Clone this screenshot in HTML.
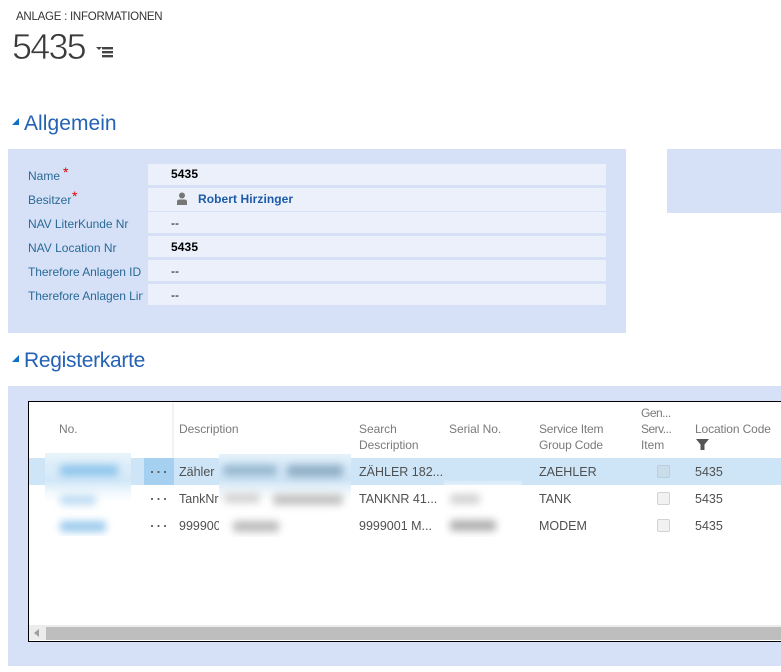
<!DOCTYPE html>
<html><head><meta charset="utf-8"><style>
html,body{margin:0;padding:0;background:#fff}
#p{position:relative;width:781px;height:672px;overflow:hidden;background:#fff;font-family:"Liberation Sans",sans-serif;font-size:12px;color:#444}
#p div,#p span.a{position:absolute;white-space:nowrap}
.lab{left:28px;color:#2a6a96;font-size:12px;line-height:16px;width:119px;overflow:hidden}
.row{left:148px;width:458px;background:#ebf0fb}
.val{left:171px;font-size:12px;line-height:16px;color:#000}
.b{font-weight:bold}
.h{color:#7a7a7a;font-size:12px;line-height:16px;letter-spacing:-.05px}
.c{color:#505050;font-size:12.5px;line-height:16px}
.cb{left:657px;width:11px;height:11px;border:1px solid #d2d2d2;border-radius:2px;background:#f2f2f2}
.dots{left:151px;width:16px;height:2px;background:radial-gradient(circle at 1px 1px,#555 1px,transparent 1.1px) 0 0/6.5px 2px repeat-x}
.bl{filter:blur(4px);border-radius:3px}
.patch{overflow:hidden}
</style></head><body><div id="p">

<div style="left:16px;top:10px;font-size:11.5px;line-height:14px;color:#333;letter-spacing:-.25px">ANLAGE : INFORMATIONEN</div>
<div style="left:12px;top:26px;font-size:36px;line-height:42px;color:#3a3a3a;letter-spacing:-1.8px;-webkit-text-stroke:.7px #fff;paint-order:normal">5435</div>
<svg style="position:absolute;left:95px;top:45px" width="20" height="13"><path d="M1 2h6l-3 3z" fill="#444"/><path d="M7 2h11v2.400H7zM7 6h11v2.400H7zM7 10h11v2.400H7z" fill="#444"/></svg>

<svg style="position:absolute;left:12px;top:118px" width="8" height="8"><path d="M0 7h7V0z" fill="#0f6fc6"/></svg>
<div style="left:24px;top:111px;font-size:21px;line-height:26px;color:#2462b4;letter-spacing:.05px">Allgemein</div>

<div style="left:8px;top:149px;width:618px;height:184px;background:#d6e1f8"></div>
<div style="left:667px;top:149px;width:114px;height:64px;background:#d6e1f8"></div>

<div class="row" style="top:164px;height:21px"></div>
<div class="row" style="top:188px;height:23px"></div>
<div class="row" style="top:212px;height:21px"></div>
<div class="row" style="top:236px;height:21px"></div>
<div class="row" style="top:260px;height:21px"></div>
<div class="row" style="top:284px;height:21px"></div>

<div class="lab" style="top:168px">Name</div>
<div style="left:63px;top:165px;color:#e00000;font-size:14px;line-height:14px">*</div>
<div class="lab" style="top:192px">Besitzer</div>
<div style="left:72px;top:189px;color:#e00000;font-size:14px;line-height:14px">*</div>
<div class="lab" style="top:216px;letter-spacing:-.05px">NAV LiterKunde Nr</div>
<div class="lab" style="top:240px">NAV Location Nr</div>
<div class="lab" style="top:264px;letter-spacing:-.05px">Therefore Anlagen ID</div>
<div class="lab" style="top:288px;width:115px;letter-spacing:-.05px">Therefore Anlagen Link</div>

<div class="val b" style="top:166px;letter-spacing:.1px">5435</div>
<svg style="position:absolute;left:176px;top:192px" width="13" height="14"><circle cx="6" cy="3.5" r="3" fill="#777"/><path d="M1 13V9.500Q1 7.500 3.500 7.500h5Q11 7.500 11 9.500V13z" fill="#777"/></svg>
<div class="b" style="left:198px;top:191px;font-size:12px;line-height:16px;color:#1d5aa8;letter-spacing:.07px">Robert Hirzinger</div>
<div class="val" style="top:215px">--</div>
<div class="val b" style="top:239px;letter-spacing:.1px">5435</div>
<div class="val" style="top:263px">--</div>
<div class="val" style="top:287px">--</div>

<svg style="position:absolute;left:12px;top:355px" width="8" height="8"><path d="M0 7h7V0z" fill="#0f6fc6"/></svg>
<div style="left:24px;top:348px;font-size:21px;line-height:26px;color:#2462b4;letter-spacing:-.3px">Registerkarte</div>

<div style="left:8px;top:386px;width:773px;height:280px;background:#d6e1f8"></div>
<div style="left:28px;top:401px;width:753px;height:241px;background:#fff;border-left:1px solid #000;border-top:1px solid #000;border-bottom:1px solid #000;box-sizing:border-box"></div>
<div style="left:172px;top:403px;width:2px;height:55px;background:#f2f2f2"></div>

<div class="h" style="left:59px;top:421px">No.</div>
<div class="h" style="left:179px;top:421px">Description</div>
<div class="h" style="left:359px;top:421px">Search</div>
<div class="h" style="left:359px;top:437px">Description</div>
<div class="h" style="left:449px;top:421px">Serial No.</div>
<div class="h" style="left:539px;top:421px;letter-spacing:-.2px">Service Item</div>
<div class="h" style="left:539px;top:437px;letter-spacing:-.15px">Group Code</div>
<div class="h" style="left:641px;top:405px;letter-spacing:-.5px">Gen...</div>
<div class="h" style="left:641px;top:421px;letter-spacing:-.5px">Serv...</div>
<div class="h" style="left:641px;top:437px">Item</div>
<div class="h" style="left:695px;top:421px;letter-spacing:-.12px">Location Code</div>
<svg style="position:absolute;left:696px;top:439px" width="14" height="12"><path d="M0 0h13L8.500 5.500V11h-4V5.500z" fill="#555"/></svg>

<div style="left:29px;top:458px;width:752px;height:27px;background:#cde5f7"></div>
<div style="left:144px;top:458px;width:30px;height:27px;background:#a6d0f0"></div>

<div class="dots" style="top:471px"></div>
<div class="dots" style="top:498px"></div>
<div class="dots" style="top:525px"></div>

<div class="c" style="left:179px;top:464px">Zähler</div>
<div class="c" style="left:179px;top:491px">TankNr</div>
<div class="c" style="left:179px;top:518px">999900</div>
<div class="c" style="left:359px;top:464px">ZÄHLER 182...</div>
<div class="c" style="left:359px;top:491px">TANKNR 41...</div>
<div class="c" style="left:359px;top:518px">9999001 M...</div>
<div class="c" style="left:539px;top:464px">ZAEHLER</div>
<div class="c" style="left:539px;top:491px">TANK</div>
<div class="c" style="left:539px;top:518px">MODEM</div>
<div class="cb" style="top:465px;background:#c8dcea;border-color:#b9cfe0"></div>
<div class="cb" style="top:492px"></div>
<div class="cb" style="top:519px"></div>
<div class="c" style="left:695px;top:464px">5435</div>
<div class="c" style="left:695px;top:491px">5435</div>
<div class="c" style="left:695px;top:518px">5435</div>

<!-- blurred No. patch -->
<div class="patch" style="left:45px;top:453px;width:86px;height:83px;background:linear-gradient(#eaf4fb 0,#dcedf9 12px,#d2e8f8 28px,#f3f9fd 40px,#fff 50px)">
  <div class="bl" style="left:15px;top:12px;width:58px;height:11px;background:#8fc5ec"></div>
  <div class="bl" style="left:15px;top:42px;width:36px;height:10px;background:#bedcf2"></div>
  <div class="bl" style="left:15px;top:68px;width:46px;height:11px;background:#9ccbee"></div>
</div>
<!-- blurred description patch -->
<div class="patch" style="left:219px;top:454px;width:132px;height:83px;background:linear-gradient(#e6f2fa 0,#d5e9f8 12px,#cfe5f6 26px,#f0f7fc 38px,#fff 46px)">
  <div class="bl" style="left:4px;top:11px;width:54px;height:11px;background:#97b8cf"></div>
  <div class="bl" style="left:68px;top:11px;width:56px;height:12px;background:#90aec5"></div>
  <div class="bl" style="left:5px;top:39px;width:36px;height:10px;background:#d2d2d2"></div>
  <div class="bl" style="left:54px;top:40px;width:70px;height:11px;background:#c2c2c2"></div>
  <div class="bl" style="left:14px;top:67px;width:46px;height:11px;background:#bcbcbc"></div>
</div>
<!-- blurred serial patch -->
<div class="patch" style="left:444px;top:479px;width:78px;height:58px;background:linear-gradient(rgba(255,255,255,0) 0,#fff 14px)">
  <div class="bl" style="left:6px;top:15px;width:30px;height:10px;background:#d2d2d2"></div>
  <div class="bl" style="left:6px;top:41px;width:46px;height:11px;background:#b0b0b0"></div>
</div>

<!-- scrollbar -->
<div style="left:29px;top:625px;width:752px;height:15px;background:#ececec"></div>
<div style="left:46px;top:627px;width:735px;height:13px;background:#bebebe"></div>
<svg style="position:absolute;left:34px;top:629px" width="7" height="9"><path d="M5 0v8L0 4z" fill="#9f9f9f"/></svg>

</div></body></html>
